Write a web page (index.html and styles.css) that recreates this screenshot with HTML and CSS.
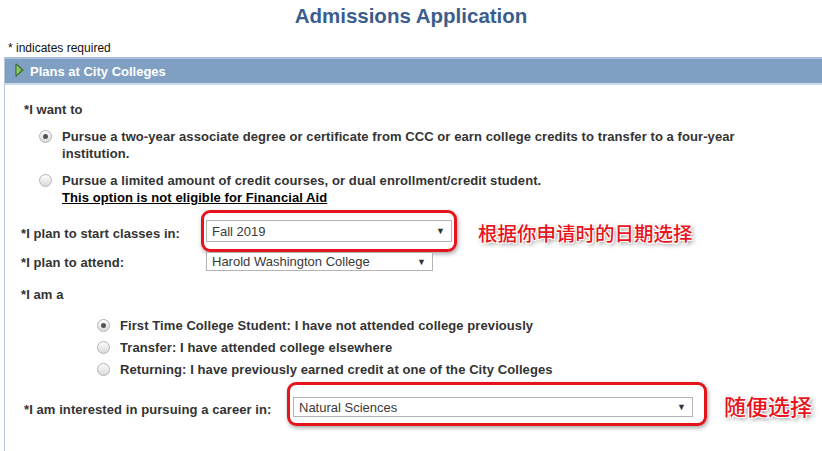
FILE: index.html
```html
<!DOCTYPE html>
<html>
<head>
<meta charset="utf-8">
<link rel="stylesheet" href="styles.css">
</head>
<body>
<h1 class="title">Admissions Application</h1>
<div class="req">* indicates required</div>
<div class="section">
  <div class="bar">
    <svg class="tri" width="9" height="14" viewBox="0 0 9 14"><defs><linearGradient id="g" x1="0" y1="0" x2="1" y2="0"><stop offset="0" stop-color="#9fdc7a"/><stop offset="1" stop-color="#4ea52f"/></linearGradient></defs><path d="M1 1 L8 7 L1 13 Z" fill="url(#g)" stroke="#3d6e2c" stroke-width="1.2" stroke-linejoin="round"/></svg>
    <span class="bar-title">Plans at City Colleges</span>
  </div>
  <div class="content">
    <div class="q q-want">*I want to</div>
    <div class="opt opt-1">
      <span class="radio checked"></span>
      <div class="opt-text">Pursue a two-year associate degree or certificate from CCC or earn college credits to transfer to a four-year institution.</div>
    </div>
    <div class="opt opt-2">
      <span class="radio"></span>
      <div class="opt-text">Pursue a limited amount of credit courses, or dual enrollment/credit student.<br><u class="note">This option is not eligible for Financial Aid</u></div>
    </div>
    <div class="row row-start">
      <div class="lbl">*I plan to start classes in:</div>
      <div class="select sel-start hl hl-start"><span>Fall 2019</span><span class="arr">&#9660;</span></div>
      <div class="anno anno-1">根据你申请时的日期选择</div>
    </div>
    <div class="row row-attend">
      <div class="lbl">*I plan to attend:</div>
      <div class="select sel-attend"><span>Harold Washington College</span><span class="arr">&#9660;</span></div>
    </div>
    <div class="q q-am">*I am a</div>
    <div class="types">
      <div class="type"><span class="radio checked"></span><span>First Time College Student: I have not attended college previously</span></div>
      <div class="type"><span class="radio"></span><span>Transfer: I have attended college elsewhere</span></div>
      <div class="type"><span class="radio"></span><span>Returning: I have previously earned credit at one of the City Colleges</span></div>
    </div>
    <div class="row row-career">
      <div class="lbl">*I am interested in pursuing a career in:</div>
      <div class="select sel-career hl hl-career"><span>Natural Sciences</span><span class="arr">&#9660;</span></div>
      <div class="anno anno-2">随便选择</div>
    </div>
  </div>
</div>
</body>
</html>
```
FILE: styles.css
```css
html, body {
  margin: 0;
  padding: 0;
  background: #fff;
}
body {
  font-family: "Liberation Sans", Arial, sans-serif;
  color: #333;
  width: 822px;
  height: 451px;
  overflow: hidden;
}
.title {
  margin: 0;
  padding-top: 4px;
  height: 24px;
  line-height: 24px;
  font-size: 20.5px;
  font-weight: bold;
  color: #3b5d8e;
  text-align: center;
}
.req {
  margin-top: 13px;
  margin-left: 8px;
  font-size: 12px;
  line-height: 14px;
  color: #111;
}
.section {
  margin-top: 2px;
  margin-left: 4px;
  border-left: 1px solid #b5c8dc;
  height: 400px;
}
.bar {
  box-sizing: border-box;
  height: 28px;
  background: #7fa0c3;
  border-top: 2px solid #a9bfd9;
  border-bottom: 2px solid #cbd9e9;
  display: flex;
  align-items: center;
  padding-left: 10px;
}
.tri {
  display: block;
  margin-top: -2px;
}
.bar-title {
  margin-left: 6px;
  color: #fff;
  font-weight: bold;
  font-size: 13px;
}
.content {
  font-size: 13px;
  letter-spacing: 0.08px;
}
.q {
  line-height: 16px;
  font-weight: bold;
}
.q-want {
  margin-top: 17px;
  margin-left: 19px;
}
.opt {
  display: flex;
  align-items: flex-start;
  margin-left: 34px;
  margin-top: 10px;
}
.opt .radio {
  margin-top: 2px;
}
.opt-text {
  margin-left: 10px;
  width: 700px;
  font-weight: bold;
  line-height: 17px;
}
.note {
  color: #000;
}
.radio {
  flex: none;
  box-sizing: border-box;
  width: 13px;
  height: 13px;
  border-radius: 50%;
  border: 1px solid #b3b3b3;
  background: linear-gradient(#fdfdfd, #dadada);
  display: inline-flex;
  align-items: center;
  justify-content: center;
}
.radio.checked::after {
  content: "";
  width: 5px;
  height: 5px;
  border-radius: 50%;
  background: #555;
}
.row {
  display: flex;
  align-items: center;
}
.lbl {
  font-weight: bold;
  flex: none;
}
.row-start {
  margin-top: 11px;
  padding-left: 16px;
}
.row-start .lbl {
  width: 185px;
  padding-top: 4px;
}
.row-attend {
  margin-top: 7px;
  padding-left: 16px;
}
.row-attend .lbl {
  width: 185px;
  padding-top: 2px;
}
.select {
  position: relative;
  box-sizing: border-box;
  border: 1px solid #b4b4b4;
  background: #fff;
  display: flex;
  align-items: center;
  justify-content: space-between;
  padding: 0 6px 0 5px;
  color: #3a3a3a;
  font-size: 13px;
  letter-spacing: 0;
  flex: none;
}
.arr {
  font-size: 9px;
  color: #333;
}
.sel-start {
  width: 246px;
  height: 22px;
}
.sel-attend {
  width: 227px;
  height: 19px;
}
.sel-career {
  width: 400px;
  height: 20px;
}
.hl::after {
  content: "";
  position: absolute;
  border: 3px solid #e5131b;
  border-radius: 9px;
  box-shadow: 1px 2px 4px rgba(0, 0, 0, 0.35);
  pointer-events: none;
}
.hl-start::after {
  left: -6px;
  right: -6px;
  top: -11px;
  bottom: -11px;
}
.hl-career::after {
  left: -7px;
  right: -15px;
  top: -16px;
  bottom: -10px;
}
.anno {
  font-family: "Noto Sans CJK SC", sans-serif;
  font-weight: 500;
  color: #e8141c;
  letter-spacing: 0;
  text-shadow: 1px 1px 0 #fff, -1px -1px 0 #fff, 1px -1px 0 #fff, -1px 1px 0 #fff, 2px 2px 4px rgba(0, 0, 0, 0.55);
  flex: none;
}
.anno-1 {
  font-size: 19.5px;
  margin-left: 26px;
  margin-top: 4px;
  line-height: 24px;
}
.anno-2 {
  font-size: 22px;
  margin-left: 31px;
  margin-top: -4px;
  line-height: 26px;
}
.q-am {
  margin-top: 16px;
  margin-left: 16px;
}
.types {
  margin-top: 11px;
  margin-left: 92px;
}
.type {
  display: flex;
  align-items: center;
  height: 22px;
  font-weight: bold;
}
.type .radio {
  margin-right: 10px;
}
.row-career {
  margin-top: 16px;
  padding-left: 19px;
}
.row-career .lbl {
  width: 269px;
  padding-top: 4px;
}
```
